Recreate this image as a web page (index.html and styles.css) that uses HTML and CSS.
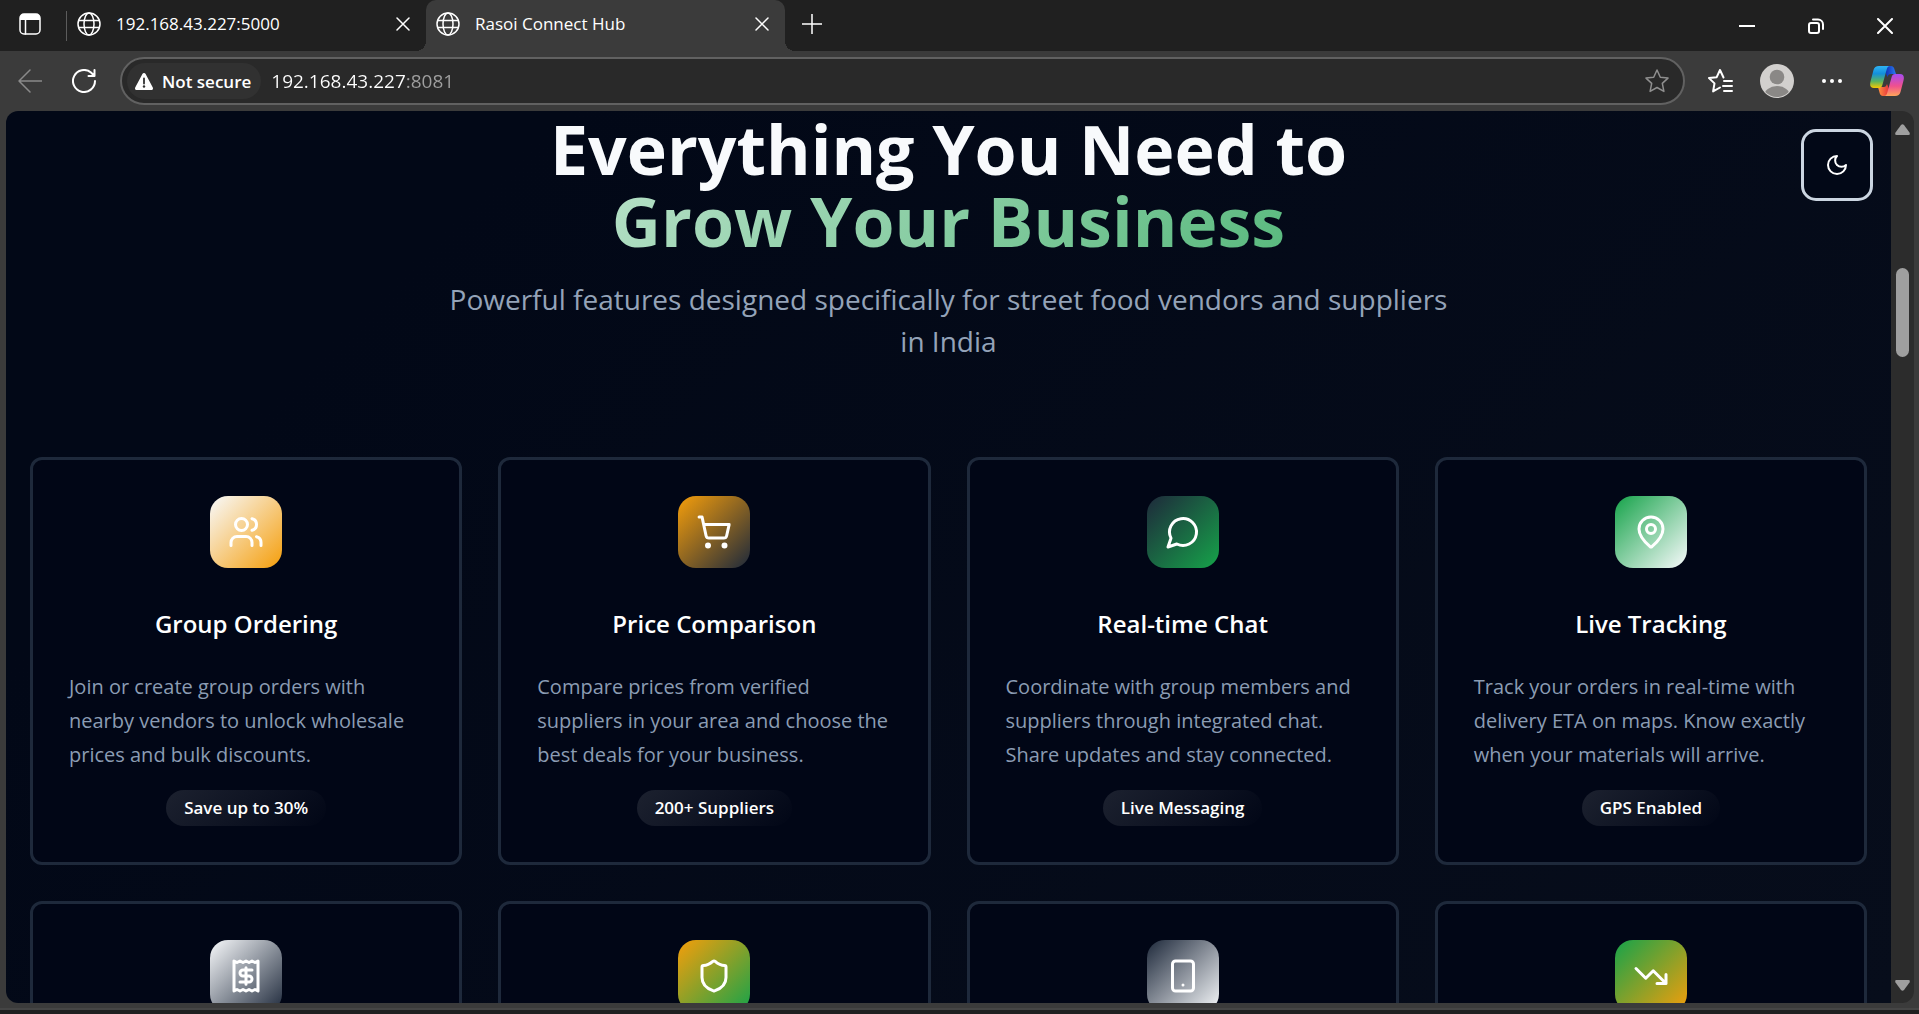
FILE: index.html
```html
<!DOCTYPE html>
<html lang="en">
<head>
<meta charset="utf-8">
<meta name="viewport" content="width=device-width, initial-scale=1">
<title>Rasoi Connect Hub</title>
<link rel="stylesheet" href="styles.css">
</head>
<body>
<svg class="defs" width="0" height="0" aria-hidden="true">
  <symbol id="globe" viewBox="0 0 24 24"><circle cx="12" cy="12" r="11"/><ellipse cx="12" cy="12" rx="5" ry="11"/><path d="M2 8.500h20M2 15.500h20"/></symbol>
  <symbol id="cross" viewBox="0 0 14 14"><path d="M1 1l12 12M13 1L1 13"/></symbol>
</svg>

<header class="tabs">
  <button class="icon-btn workspace" aria-label="Tab actions">
    <svg width="22" height="22" viewBox="0 0 22 22"><rect x="1" y="1" width="20" height="20" rx="4" class="line"/><path d="M1 7V5a4 4 0 0 1 4-4h12a4 4 0 0 1 4 4v2z" fill="#fff"/><path d="M6.500 7v14" class="line"/></svg>
  </button>
  <div class="tab">
    <svg class="line" width="24" height="24"><use href="#globe"/></svg>
    <span class="tab-title">192.168.43.227:5000</span>
    <button class="icon-btn" aria-label="Close tab"><svg class="line" width="14" height="14"><use href="#cross"/></svg></button>
  </div>
  <div class="tab active">
    <svg class="line" width="24" height="24"><use href="#globe"/></svg>
    <span class="tab-title">Rasoi Connect Hub</span>
    <button class="icon-btn" aria-label="Close tab"><svg class="line" width="14" height="14"><use href="#cross"/></svg></button>
  </div>
  <button class="icon-btn new-tab" aria-label="New tab"><svg class="line" width="20" height="20" viewBox="0 0 20 20"><path d="M10 0v20M0 10h20"/></svg></button>
  <div class="window-controls">
    <button class="icon-btn" aria-label="Minimize"><svg class="line" width="16" height="16" viewBox="0 0 16 16"><path d="M0 8h16" stroke-width="2"/></svg></button>
    <button class="icon-btn" aria-label="Restore"><svg class="line" width="16" height="16" viewBox="0 0 16 16" stroke-width="2"><rect x="1" y="5" width="10" height="10" rx="2"/><path d="M5 1.500h5a5 5 0 0 1 5 5V11"/></svg></button>
    <button class="icon-btn" aria-label="Close window"><svg class="line" width="16" height="16" viewBox="0 0 16 16" stroke-width="2"><path d="M1 1l14 14M15 1L1 15"/></svg></button>
  </div>
</header>

<nav class="toolbar">
  <button class="icon-btn back" aria-label="Back"><svg class="line" width="24" height="24" viewBox="0 0 24 24"><path d="M24 12H1M12 1L1 12l11 11"/></svg></button>
  <button class="icon-btn refresh" aria-label="Refresh"><svg class="line" width="24" height="24" viewBox="0 0 24 24" stroke-width="2"><path d="M23 12a11 11 0 1 1-4-8.500l3 3M22.500 1v6h-6"/></svg></button>
  <div class="address">
    <button class="security"><svg width="18" height="17" viewBox="0 0 18 17" aria-hidden="true"><path d="M9 0c.700 0 1.300.400 1.600 1l7.200 13.500c.600 1.200-.200 2.500-1.600 2.500H1.800c-1.400 0-2.200-1.300-1.600-2.500L7.400 1C7.700.400 8.300 0 9 0z" fill="#fff"/><path d="M9 5.500v5" stroke="#303030" stroke-width="1.800" stroke-linecap="round"/><circle cx="9" cy="13.500" r="1.200" fill="#303030"/></svg>Not secure</button>
    <input class="url" type="text" aria-label="Address" value="192.168.43.227:8081">
    <button class="icon-btn dim" aria-label="Add to favorites"><svg class="line" width="26" height="26" viewBox="0 0 26 26"><path d="M13 2l3.300 7.200 7.700.900-5.700 5.300 1.600 8-6.900-3.900-6.900 3.900 1.600-8L2 10.100l7.700-.900z"/></svg></button>
  </div>
  <div class="actions">
    <button class="icon-btn" aria-label="Favorites"><svg class="line" width="26" height="26" viewBox="0 0 26 26" stroke-width="2"><path d="M16.500 9.500L13 2 9.700 9.200 2 10.100l5.500 5.300-1.400 8 6.900-3.900M17 13h8M16 18h9M17 23h8"/></svg></button>
    <button class="icon-btn" aria-label="Profile"><svg width="34" height="34" viewBox="0 0 34 34"><clipPath id="face"><circle cx="17" cy="17" r="16"/></clipPath><circle cx="17" cy="17" r="17" fill="#d2d0ce"/><g fill="#8a8886" clip-path="url(#face)"><circle cx="17" cy="13" r="7.300"/><ellipse cx="17" cy="32" rx="13" ry="10"/></g></svg></button>
    <button class="icon-btn" aria-label="Settings and more"><svg width="22" height="6" viewBox="0 0 22 6" fill="#fff"><circle cx="3" cy="3" r="2"/><circle cx="11" cy="3" r="2"/><circle cx="19" cy="3" r="2"/></svg></button>
    <button class="icon-btn" aria-label="Copilot"><svg width="34" height="32" viewBox="0 0 34 32">
      <defs>
        <linearGradient id="c1" x1="0" y1="0" x2="0" y2="1"><stop offset="0" stop-color="#2fb4f5"/><stop offset=".35" stop-color="#138fdb"/><stop offset=".7" stop-color="#5cb45f"/><stop offset="1" stop-color="#f7c800"/></linearGradient>
        <linearGradient id="c2" x1="0" y1="0" x2="0" y2="1"><stop offset="0" stop-color="#a64bf2"/><stop offset=".55" stop-color="#f0508e"/><stop offset="1" stop-color="#ffa55a"/></linearGradient>
        <linearGradient id="c3"><stop offset="0" stop-color="#1232b8"/><stop offset="1" stop-color="#2a7bf0"/></linearGradient>
        <linearGradient id="c4"><stop offset="0" stop-color="#ff9440"/><stop offset="1" stop-color="#e8323c"/></linearGradient>
      </defs>
      <path d="M16 1h5c2 0 3 1.500 3.500 3.500L26 9h-5c-2 0-3 1-3.500 3L16 9z" fill="url(#c3)"/>
      <path d="M18 31h-5c-2 0-3-1.500-3.500-3.500L8 22h6c1.500 0 2.300-1 3-3l2 5z" fill="url(#c4)"/>
      <path d="M9 1h11c-2 0-2.700 1.500-3.300 3.500l-4.200 15C12 21.500 11 23 9 23H4c-3.500 0-4.500-2.500-3.500-6.500l3-11.500C4.200 2.500 6 1 9 1z" fill="url(#c1)"/>
      <path d="M25 31H14c2 0 2.700-1.500 3.300-3.500l4.200-15C22 10.500 23 9 25 9h5c3.500 0 4.500 2.500 3.500 6.500l-3 11.500c-.700 2.500-2.500 4-5.500 4z" fill="url(#c2)"/>
    </svg></button>
  </div>
</nav>

<div class="viewport">
  <main class="page">
    <div class="intro">
      <h1>Everything You Need to<br><span class="accent">Grow Your Business</span></h1>
      <p>Powerful features designed specifically for street food vendors and suppliers in India</p>
    </div>
    <section class="cards">
      <article class="card">
        <div class="tile white-amber"><svg viewBox="0 0 24 24"><path d="M16 21v-2a4 4 0 0 0-4-4H6a4 4 0 0 0-4 4v2"/><circle cx="9" cy="7" r="4"/><path d="M22 21v-2a4 4 0 0 0-3-3.870M16 3.130a4 4 0 0 1 0 7.750"/></svg></div>
        <h2>Group Ordering</h2>
        <p>Join or create group orders with nearby vendors to unlock wholesale prices and bulk discounts.</p>
        <span class="pill">Save up to 30%</span>
      </article>
      <article class="card">
        <div class="tile amber-slate"><svg viewBox="0 0 24 24"><circle cx="8" cy="21" r="1"/><circle cx="19" cy="21" r="1"/><path d="M2.050 2.050h2l2.660 12.420a2 2 0 0 0 2 1.580h9.780a2 2 0 0 0 1.950-1.570l1.650-7.430H5.120"/></svg></div>
        <h2>Price Comparison</h2>
        <p>Compare prices from verified suppliers in your area and choose the best deals for your business.</p>
        <span class="pill">200+ Suppliers</span>
      </article>
      <article class="card">
        <div class="tile slate-green"><svg viewBox="0 0 24 24"><path d="M7.900 20A9 9 0 1 0 4 16.100L2 22Z"/></svg></div>
        <h2>Real-time Chat</h2>
        <p>Coordinate with group members and suppliers through integrated chat. Share updates and stay connected.</p>
        <span class="pill">Live Messaging</span>
      </article>
      <article class="card">
        <div class="tile green-white"><svg viewBox="0 0 24 24"><path d="M20 10c0 4.993-5.539 10.193-7.399 11.799a1 1 0 0 1-1.202 0C9.539 20.193 4 14.993 4 10a8 8 0 0 1 16 0"/><circle cx="12" cy="10" r="3"/></svg></div>
        <h2>Live Tracking</h2>
        <p>Track your orders in real-time with delivery ETA on maps. Know exactly when your materials will arrive.</p>
        <span class="pill">GPS Enabled</span>
      </article>
      <article class="card">
        <div class="tile white-slate"><svg viewBox="0 0 24 24"><path d="M4 2v20l2-1 2 1 2-1 2 1 2-1 2 1 2-1 2 1V2l-2 1-2-1-2 1-2-1-2 1-2-1-2 1Z"/><path d="M16 8h-6a2 2 0 1 0 0 4h4a2 2 0 1 1 0 4H8M12 17.500v-11"/></svg></div>
      </article>
      <article class="card">
        <div class="tile amber-green"><svg viewBox="0 0 24 24"><path d="M20 13c0 5-3.500 7.500-7.660 8.950a1 1 0 0 1-.670-.010C7.500 20.500 4 18 4 13V6a1 1 0 0 1 1-1c2 0 4.500-1.200 6.240-2.720a1.170 1.170 0 0 1 1.520 0C14.510 3.810 17 5 19 5a1 1 0 0 1 1 1z"/></svg></div>
      </article>
      <article class="card">
        <div class="tile slate-white"><svg viewBox="0 0 24 24"><rect x="5" y="2" width="14" height="20" rx="2"/><path d="M12 18h.010"/></svg></div>
      </article>
      <article class="card">
        <div class="tile green-amber"><svg viewBox="0 0 24 24"><path d="M22 17l-8.500-8.500-5 5L2 7M16 17h6v-6"/></svg></div>
      </article>
    </section>
    <button class="theme" aria-label="Toggle theme"><svg class="line" width="24" height="24" viewBox="0 0 24 24" stroke-width="2"><path d="M12 3a6 6 0 0 0 9 9 9 9 0 1 1-9-9Z"/></svg></button>
  </main>
  <div class="scrollbar" aria-hidden="true">
    <svg width="15" height="11" viewBox="0 0 15 11"><path d="M6 1q1.500-1.500 3 0l5.500 7.500q1 2.500-1 2.500h-12q-2 0-1-2.500z"/></svg>
    <div class="track"><div class="thumb"></div></div>
    <svg width="15" height="11" viewBox="0 0 15 11"><path d="M6 10q1.500 1.500 3 0l5.500-7.500q1-2.500-1-2.500h-12q-2 0-1 2.500z"/></svg>
  </div>
</div>
<footer class="desktop-edge"></footer>
</body>
</html>
```
FILE: styles.css
```css
* { box-sizing: border-box; }

body {
  margin: 0;
  height: 100vh;
  display: flex;
  flex-direction: column;
  overflow: hidden;
  background: #3b3b3b;
  color: #fff;
  font-family: "Open Sans", "Noto Sans", sans-serif;
}

.defs { position: absolute; }

button, input { font: inherit; color: inherit; }

.line {
  fill: none;
  stroke: currentColor;
  stroke-width: 1.5;
  stroke-linecap: round;
  stroke-linejoin: round;
}
.line[stroke-width="2"] { stroke-width: 2; }

.icon-btn {
  display: flex;
  align-items: center;
  justify-content: center;
  flex: none;
  padding: 0;
  border: 0;
  background: none;
}

/* Tab strip */
.tabs {
  display: flex;
  align-items: stretch;
  flex: none;
  height: 51px;
  padding-left: 19px;
  background: #202020;
}
.workspace { padding: 0 26px 3px 0; }
.tab {
  position: relative;
  display: flex;
  align-items: center;
  width: 359px;
  padding: 0 16px 3px 10px;
  gap: 15px;
}
.tab:not(.active)::before {
  content: "";
  position: absolute;
  left: -1px;
  top: 11px;
  width: 1px;
  height: 30px;
  background: #5c5c5c;
}
.tab-title {
  flex: 1;
  font-size: 17px;
  line-height: 24px;
}
.tab.active {
  background: #3b3b3b;
  border-radius: 10px 10px 0 0;
}
.tab.active::before,
.tab.active::after {
  content: "";
  position: absolute;
  bottom: 0;
  width: 10px;
  height: 10px;
}
.tab.active::before {
  right: 100%;
  background: radial-gradient(circle at 0 0, #202020 10px, #3b3b3b 10px);
}
.tab.active::after {
  left: 100%;
  background: radial-gradient(circle at 100% 0, #202020 10px, #3b3b3b 10px);
}
.new-tab { padding: 0 17px 4px; }
.window-controls {
  display: flex;
  gap: 53px;
  margin-left: auto;
  padding-right: 26px;
}

/* Toolbar */
.toolbar {
  display: flex;
  align-items: center;
  flex: none;
  height: 60px;
  padding: 0 15px 0 18px;
  gap: 22px;
}
.back { color: #8a8a8a; margin-right: 8px; }
.refresh { margin-right: 2px; }
.address {
  display: flex;
  align-items: center;
  flex: 1;
  height: 48px;
  padding: 0 13px 0 5px;
  border: 2px solid #616161;
  border-radius: 24px;
  background: #292929;
}
.security {
  display: flex;
  align-items: center;
  gap: 9px;
  height: 36px;
  padding: 0 10px 0 8px;
  border: 0;
  border-radius: 18px;
  background: #313131;
  font-size: 17px;
  font-weight: 600;
}
.url {
  flex: 1;
  min-width: 0;
  height: 36px;
  padding: 0 0 0 10px;
  border: 0;
  outline: 0;
  font-size: 19px;
  color: transparent;
  background: linear-gradient(90deg, #fff 145px, #a0a0a0 145px);
  background-clip: text;
  -webkit-background-clip: text;
}
.dim { color: #8f8f8f; }
.actions {
  display: flex;
  align-items: center;
  gap: 27px;
}

/* Page viewport */
.viewport {
  display: flex;
  flex: 1;
  min-height: 0;
  margin: 0 5px 7px 6px;
  border-radius: 12px;
  overflow: hidden;
}
.page {
  position: relative;
  flex: 1;
  min-width: 0;
  overflow: hidden;
  padding: 2px 24px 0;
  background: linear-gradient(135deg, #020817 0%, #020817 20%, #070d1b 100%);
}
.intro {
  max-width: 1024px;
  margin: 0 auto 95px;
  text-align: center;
}
h1, h2, p { margin: 0; }
h1 {
  font-size: 68px;
  line-height: 72px;
  font-weight: 700;
  color: #f8fafc;
  margin-bottom: 21px;
}
.accent {
  color: transparent;
  background: linear-gradient(135deg, #b6e0c7, #58b97d);
  background-clip: text;
  -webkit-background-clip: text;
}
.intro p {
  font-size: 28px;
  line-height: 42px;
  color: #94a3b8;
}

.cards {
  display: grid;
  grid-template-columns: repeat(4, 1fr);
  gap: 36px;
}
.card {
  display: flex;
  flex-direction: column;
  align-items: center;
  padding: 36px;
  border: 3px solid #1e293b;
  border-radius: 12px;
  background: #010616;
}
.card h2 {
  margin: 39px 0 29px;
  font-size: 24px;
  line-height: 34px;
  font-weight: 600;
}
.card p {
  align-self: stretch;
  font-size: 20px;
  line-height: 34px;
  color: #8b9cb3;
}
.pill {
  margin-top: 18px;
  padding: 0 18px;
  border-radius: 18px;
  background: linear-gradient(135deg, #1c212f, #010616);
  font-size: 17px;
  line-height: 36px;
  font-weight: 600;
}

.tile {
  display: flex;
  align-items: center;
  justify-content: center;
  width: 72px;
  height: 72px;
  border-radius: 18px;
}
.tile svg {
  width: 36px;
  height: 36px;
  fill: none;
  stroke: #fff;
  stroke-width: 2;
  stroke-linecap: round;
  stroke-linejoin: round;
}
.white-amber { background: linear-gradient(135deg, #f8fafc, #f59e0b); }
.amber-slate { background: linear-gradient(135deg, #f59e0b, #1e293b); }
.slate-green { background: linear-gradient(135deg, #1e293b, #16a34a); }
.green-white { background: linear-gradient(135deg, #16a34a, #f8fafc); }
.white-slate { background: linear-gradient(135deg, #f8fafc, #1e293b); }
.amber-green { background: linear-gradient(135deg, #f59e0b, #16a34a); }
.slate-white { background: linear-gradient(135deg, #1e293b, #f8fafc); }
.green-amber { background: linear-gradient(135deg, #16a34a, #f59e0b); }

.theme {
  position: absolute;
  top: 18px;
  right: 18px;
  display: flex;
  align-items: center;
  justify-content: center;
  width: 72px;
  height: 72px;
  padding: 0;
  border: 3px solid #cbd5e1;
  border-radius: 15px;
  background: #020817;
}

.scrollbar {
  display: flex;
  flex-direction: column;
  align-items: center;
  flex: none;
  width: 23px;
  padding: 13px 0 12px;
  background: #2c2c2c;
}
.scrollbar svg { fill: #9f9f9f; }
.track { flex: 1; padding-top: 133px; }
.thumb {
  width: 13px;
  height: 89px;
  border-radius: 7px;
  background: #9f9f9f;
}

.desktop-edge {
  flex: none;
  height: 4px;
  background: #202020;
  box-shadow: 0 -2px 0 #454545;
}
```
